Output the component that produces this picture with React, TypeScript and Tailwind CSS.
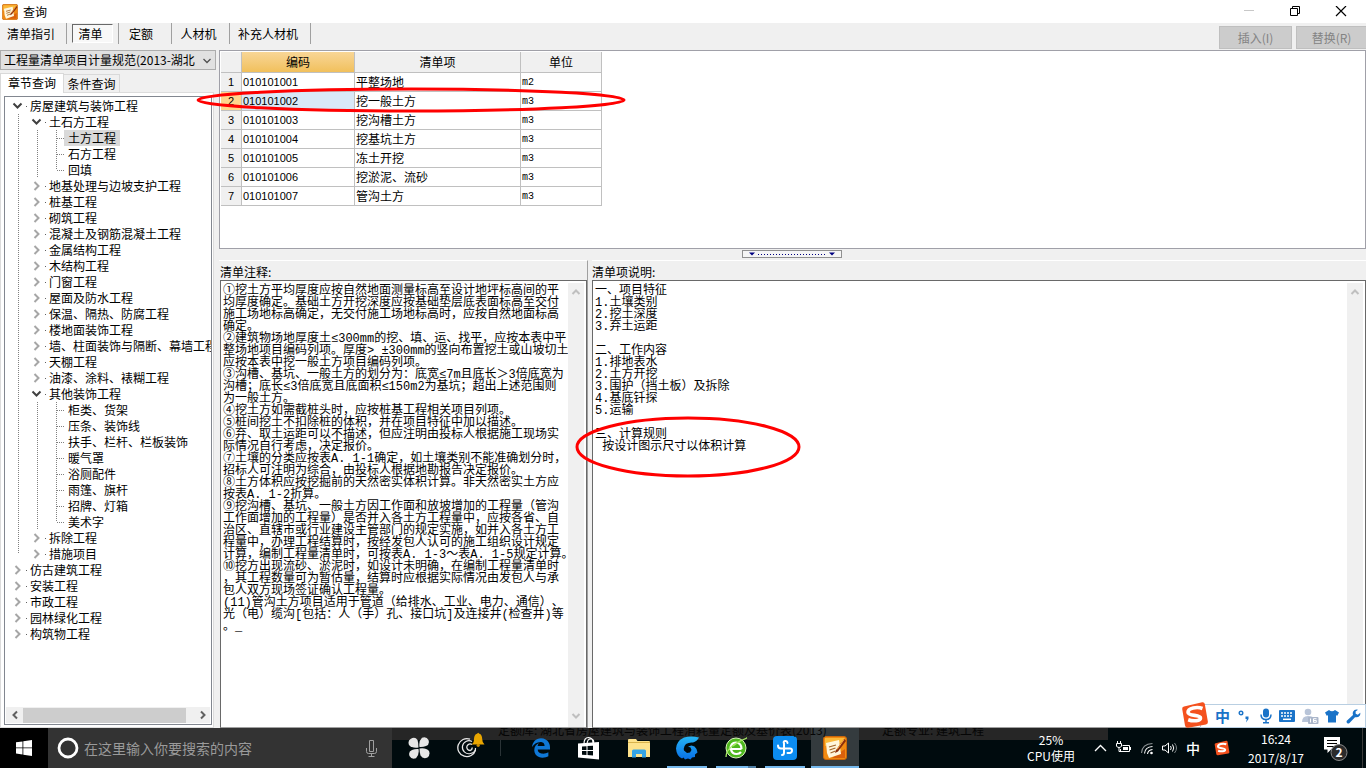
import React from "react";
import { FaEdgeLegacy } from "react-icons/fa";

type TreeRow = { label: string; depth: number; state: "open" | "closed" | "leaf"; last?: boolean };

const closed = (label: string, last = false): TreeRow => ({ label, depth: 1, state: "closed", last });
const leaf = (label: string, last = false): TreeRow => ({ label, depth: 2, state: "leaf", last });

const treeRows: TreeRow[] = [
  { label: "房屋建筑与装饰工程", depth: 0, state: "open" },
  { label: "土石方工程", depth: 1, state: "open" },
  leaf("土方工程"),
  leaf("石方工程"),
  leaf("回填", true),
  closed("地基处理与边坡支护工程"),
  closed("桩基工程"),
  closed("砌筑工程"),
  closed("混凝土及钢筋混凝土工程"),
  closed("金属结构工程"),
  closed("木结构工程"),
  closed("门窗工程"),
  closed("屋面及防水工程"),
  closed("保温、隔热、防腐工程"),
  closed("楼地面装饰工程"),
  closed("墙、柱面装饰与隔断、幕墙工程"),
  closed("天棚工程"),
  closed("油漆、涂料、裱糊工程"),
  { label: "其他装饰工程", depth: 1, state: "open" },
  leaf("柜类、货架"),
  leaf("压条、装饰线"),
  leaf("扶手、栏杆、栏板装饰"),
  leaf("暖气罩"),
  leaf("浴厕配件"),
  leaf("雨篷、旗杆"),
  leaf("招牌、灯箱"),
  leaf("美术字", true),
  closed("拆除工程"),
  closed("措施项目", true),
  { label: "仿古建筑工程", depth: 0, state: "closed" },
  { label: "安装工程", depth: 0, state: "closed" },
  { label: "市政工程", depth: 0, state: "closed" },
  { label: "园林绿化工程", depth: 0, state: "closed" },
  { label: "构筑物工程", depth: 0, state: "closed" },
];

const items = [
  ["010101001", "平整场地", "m2"],
  ["010101002", "挖一般土方", "m3"],
  ["010101003", "挖沟槽土方", "m3"],
  ["010101004", "挖基坑土方", "m3"],
  ["010101005", "冻土开挖", "m3"],
  ["010101006", "挖淤泥、流砂", "m3"],
  ["010101007", "管沟土方", "m3"],
];

const notes = `①挖土方平均厚度应按自然地面测量标高至设计地坪标高间的平
均厚度确定。基础土方开挖深度应按基础垫层底表面标高至交付
施工场地标高确定，无交付施工场地标高时，应按自然地面标高
确定。
②建筑物场地厚度土≤300mm的挖、填、运、找平，应按本表中平
整场地项目编码列项。厚度> ±300mm的竖向布置挖土或山坡切土
应按本表中挖一般土方项目编码列项。
③沟槽、基坑、一般土方的划分为：底宽≤7m且底长＞3倍底宽为
沟槽；底长≤3倍底宽且底面积≤150m2为基坑；超出上述范围则
为一般土方。
④挖土方如需截桩头时，应按桩基工程相关项目列项。
⑤桩间挖土不扣除桩的体积，并在项目特征中加以描述。
⑥弃、取土运距可以不描述，但应注明由投标人根据施工现场实
际情况自行考虑，决定报价。
⑦土壤的分类应按表A. 1-1确定，如土壤类别不能准确划分时，
招标人可注明为综合，由投标人根据地勘报告决定报价。
⑧土方体积应按挖掘前的天然密实体积计算。非天然密实土方应
按表A. 1-2折算。
⑨挖沟槽、基坑、一般土方因工作面和放坡增加的工程量（管沟
工作面增加的工程量）是否并入各土方工程量中，应按各省、自
治区、直辖市或行业建设主管部门的规定实施，如并入各土方工
程量中，办理工程结算时，按经发包人认可的施工组织设计规定
计算，编制工程量清单时，可按表A. 1-3～表A. 1-5规定计算。
⑩挖方出现流砂、淤泥时，如设计未明确，在编制工程量清单时
，其工程数量可为暂估量，结算时应根据实际情况由发包人与承
包人双方现场签证确认工程量。
(11)管沟土方项目适用于管道（给排水、工业、电力、通信）、
光（电）缆沟[包括：人（手）孔、接口坑]及连接井(检查井)等
。_`;

const description = `一、项目特征
1.土壤类别
2.挖土深度
3.弃土运距

二、工作内容
1.排地表水
2.土方开挖
3.围护（挡土板）及拆除
4.基底钎探
5.运输

三、计算规则
 按设计图示尺寸以体积计算`;

function AppLogo({ className }: { className: string }) {
  return (
    <svg viewBox="0 0 24 24" className={className} aria-hidden="true">
      <rect x="0.5" y="0.5" width="23" height="23" rx="2.5" fill="#f08a12" stroke="#c9660a" />
      <path d="M2 2h20v4L2 10z" fill="#fbb93a" />
      <path d="M2 22h20v-9L9 22z" fill="#d9600c" />
      <path d="M3 7l13-3 2 14-12 4-2-5z" fill="#fff6dc" />
      <path d="M6 11l7-2M6.5 14l6-2M7.5 17l5-2" stroke="#a5672b" strokeWidth="1.3" fill="none" />
      <path d="M21.5 2.5L13 14l-1 3 3-1.500L23 5z" fill="#8b2e0c" />
      <path d="M21 3.500L14 13.500" stroke="#f9a94a" strokeWidth="1" />
    </svg>
  );
}

function SogouLogo({ className }: { className: string }) {
  return (
    <svg viewBox="0 0 28 28" className={className} aria-hidden="true">
      <path d="M3 5.500Q1 5.800 1.200 8L4 24.500Q4.500 27 7 26.700L25 23.500Q27.200 23 26.900 20.800L23.800 3Q23.400 .9 21.200 1.200z" fill="#f4511e" />
      <path d="M21.500 7.500C16 5.500 7 7 7 11.300c0 4.200 12.500 2 12.500 5.700 0 3-7 3.600-12.300 1.700" fill="none" stroke="#fff" strokeWidth="3.600" />
    </svg>
  );
}

function Chevron({ dir, className, weight = 2 }: { dir: "up" | "down" | "left" | "right"; className: string; weight?: number }) {
  const paths = {
    up: "M1.500 7L5 3.500 8.500 7",
    down: "M1.500 3L5 6.500 8.500 3",
    left: "M7 1.500L3.500 5 7 8.500",
    right: "M3 1.500L6.500 5 3 8.500",
  };
  return (
    <svg viewBox="0 0 10 10" className={className} fill="none" stroke="currentColor" strokeWidth={weight} aria-hidden="true">
      <path d={paths[dir]} />
    </svg>
  );
}

function TreeItem({ row }: { row: TreeRow }) {
  const cells = [];
  for (let level = 0; level < row.depth; level++) {
    cells.push(
      <svg key={level} width="19" height="16" className="shrink-0" aria-hidden="true">
        <path d={row.last && row.depth === 1 ? "M11.500 0V8" : "M11.500 0V16"} stroke="#808080" strokeDasharray="1 1" />
      </svg>
    );
  }
  return (
    <li role="treeitem" aria-expanded={row.state === "leaf" ? undefined : row.state === "open"} className="flex h-4 items-center">
      {cells}
      <svg width="19" height="16" className="shrink-0" fill="none" aria-hidden="true">
        {row.state === "leaf" && (
          <>
            <path d={row.last ? "M11.500 0V8" : "M11.500 0V16"} stroke="#808080" strokeDasharray="1 1" />
            <path d="M12 8.500H19" stroke="#808080" strokeDasharray="1 1" />
          </>
        )}
        {row.state === "open" && <path d="M6.500 5.500L10.500 9.500L14.500 5.500" stroke="#404040" strokeWidth="2" />}
        {row.state === "closed" && <path d="M8.500 4L12.500 8L8.500 12" stroke="#a6a6a6" strokeWidth="2" />}
      </svg>
      <button
        type="button"
        className={
          "relative h-4 px-1 leading-4 whitespace-nowrap " + (row.label === "土方工程" ? "bg-[#d9d9d9]" : "")
        }
      >
        {row.state !== "leaf" && <span className="absolute left-0 top-2 h-px w-px bg-[#606060]" />}
        {row.label}
      </button>
    </li>
  );
}

function VerticalScroll() {
  return (
    <div className="mt-0.5 mr-0.5 flex w-4 shrink-0 flex-col items-center justify-between bg-[#f0f0f0] pt-1 pb-1.5 text-[#bfbfbf]">
      <Chevron dir="up" className="h-2.5 w-2.5" />
      <Chevron dir="down" className="h-2.5 w-2.5" />
    </div>
  );
}

function NotePane({ id, label, text, className, children }: { id: string; label: string; text: string; className: string; children?: React.ReactNode }) {
  return (
    <section className={"relative flex flex-col border-t border-white " + className}>
      <label htmlFor={id} className="flex h-[19px] items-end leading-4">
        {label}
      </label>
      <div className="flex flex-1 border border-[#696969] border-b-[#a0a0a0] bg-white">
        <textarea
          id={id}
          readOnly
          spellCheck={false}
          defaultValue={text}
          className="min-w-0 flex-1 resize-none overflow-hidden bg-white pt-1 pl-0.5 leading-3 whitespace-pre outline-none font-['Liberation_Mono','Noto_Sans_CJK_SC',monospace]"
        />
        <VerticalScroll />
      </div>
      {children}
    </section>
  );
}

const toolTabs = [
  { label: "清单指引", box: "w-[66px]" },
  { label: "清单", box: "w-[51px]" },
  { label: "定额", box: "w-[52px] pr-0" },
  { label: "人材机", box: "w-[57px]" },
  { label: "补充人材机", box: "w-[80px]" },
];

function toolTabClass(label: string) {
  if (label === "清单") {
    return "mx-[5px] my-px flex-1 border border-t-[#696969] border-l-[#696969] border-r-white border-b-white bg-[#f8f8f8] pr-1";
  }
  if (label === "定额") return "pr-2";
  return "pr-1";
}

function QueryWindow() {
  return (
    <div className="flex flex-1 flex-col bg-[#f0f0f0]">
      <header className="flex h-[23px] items-center justify-between bg-white pl-0.5">
        <h1 className="flex items-center gap-[5px]">
          <AppLogo className="h-4 w-4" />
          查询
        </h1>
        <div className="flex pr-0.5">
          <button type="button" aria-label="最小化" className="flex w-[46px] justify-center text-[#c8c8c8]">
            <svg width="12" height="12" stroke="currentColor"><path d="M1 4.500H11" /></svg>
          </button>
          <button type="button" aria-label="还原" className="flex w-[46px] justify-center">
            <svg width="12" height="12" stroke="#000" fill="none"><path d="M1.500 2.500H8.500V9.500H1.500zM3.500 2.500V.5H10.500V7.500H8.500" /></svg>
          </button>
          <button type="button" aria-label="关闭" className="flex w-[46px] justify-center">
            <svg width="12" height="12" stroke="#000" strokeWidth="1.200"><path d="M1 0L11 10M11 0L1 10" /></svg>
          </button>
        </div>
      </header>

      <nav className="flex h-[27px] items-start justify-between">
        <div className="flex">
          {toolTabs.map((tab) => (
            <div key={tab.label} className={"box-content flex h-[21px] items-stretch justify-center border-r border-[#a0a0a0] " + tab.box}>
              <button type="button" className={toolTabClass(tab.label)}>
                {tab.label}
              </button>
            </div>
          ))}
        </div>
        <div className="flex gap-1 pt-[3px] text-[#838383]">
          <button type="button" className="h-[23px] w-[73px] border border-[#bfbfbf] bg-[#cccccc]">插入(I)</button>
          <button type="button" className="h-[23px] w-[70px] border border-r-0 border-[#bfbfbf] bg-[#cccccc]">替换(R)</button>
        </div>
      </nav>

      <main className="flex flex-1">
        <aside className="flex w-[219px] shrink-0 flex-col pr-[5px]">
          <div className="relative">
            <select
              aria-label="计量规范"
              className="block h-5 w-[216px] appearance-none overflow-hidden border border-[#adadad] bg-[#e1e1e1] pl-[3px] pr-4 leading-4 outline-none"
            >
              <option>工程量清单项目计量规范(2013-湖北</option>
            </select>
            <Chevron dir="down" weight={1.3} className="pointer-events-none absolute top-1.5 right-0.5 h-2.5 w-2.5 text-[#505050]" />
          </div>
          <div role="tablist" className="flex items-end pt-[3px]">
            <button type="button" role="tab" aria-selected="true" className="relative z-10 -mb-px h-5 w-16 border-x border-t border-[#d9d9d9] bg-white leading-4 pb-0.5">章节查询</button>
            <button type="button" role="tab" aria-selected="false" className="h-[18px] w-14 border-t border-r border-[#d9d9d9]">条件查询</button>
          </div>
          <div className="flex flex-1 flex-col border border-[#dcdcdc] bg-white py-[3px] pr-px pb-0.5 pl-[3px]">
            <div className="flex flex-1 flex-col justify-between border border-[#828790] p-px">
              <ul role="tree" className="w-[205px] overflow-hidden pl-px">
                {treeRows.map((row) => (
                  <TreeItem key={row.label} row={row} />
                ))}
              </ul>
              <div className="flex h-4 items-center bg-[#f0f0f0] text-[#606060]">
                <span className="flex w-[17px] justify-center"><Chevron dir="left" className="h-2.5 w-2.5" /></span>
                <span className="h-[15px] flex-1 bg-[#cdcdcd]" />
                <span className="flex w-6 justify-end pr-0.5"><Chevron dir="right" className="h-2.5 w-2.5" /></span>
              </div>
            </div>
          </div>
        </aside>

        <div className="flex min-w-0 flex-1 flex-col">
          <section className="relative h-[199px] border border-[#a0a0a8] bg-white p-px">
            <table className="w-[381px] table-fixed border-separate border-spacing-0">
              <colgroup>
                <col className="w-[21px]" />
                <col className="w-[113px]" />
                <col className="w-[166px]" />
                <col className="w-[81px]" />
              </colgroup>
              <thead>
                <tr className="h-[21px] bg-[#f0f0f0]">
                  <th className="border-r border-b border-[#c0c0c0] p-0" />
                  <th className="border-r border-b border-[#c0c0c0] bg-linear-to-b from-[#f8d696] to-[#f1c05b] p-0 font-normal">编码</th>
                  <th className="border-r border-b border-[#c0c0c0] p-0 font-normal">清单项</th>
                  <th className="border-r border-b border-[#c0c0c0] p-0 font-normal">单位</th>
                </tr>
              </thead>
              <tbody>
                {items.map(([code, name, unit], i) => (
                  <tr key={code} className="h-[19px] leading-4">
                    <th scope="row" className={"border-r border-b border-[#c0c0c0] p-0 text-[11px] leading-4 font-normal font-['Liberation_Sans',sans-serif] " + (i === 1 ? "bg-[#ffd58d]" : "bg-[#f0f0f0]")}>
                      {i + 1}
                    </th>
                    <td className={"border-r border-b border-[#c0c0c0] p-0 pl-px text-[11px] leading-4 font-['Liberation_Sans',sans-serif] " + (i === 1 ? "bg-[#d9e9f7]" : "")}>{code}</td>
                    <td className="border-r border-b border-[#c0c0c0] p-0 pl-px">{name}</td>
                    <td className="border-r border-b border-[#c0c0c0] p-0 pt-0.5 pl-px text-[10px] leading-4 font-['Liberation_Mono',monospace]">{unit}</td>
                  </tr>
                ))}
              </tbody>
            </table>
            <svg className="pointer-events-none absolute top-[36px] -left-[25px] z-20" width="432" height="26" fill="none" aria-hidden="true">
              <ellipse cx="216" cy="13" rx="213" ry="11" stroke="#f00" strokeWidth="3" />
            </svg>
          </section>

          <div className="flex h-[11px] items-start justify-center pt-px pr-0.5">
            <svg width="100" height="8" aria-hidden="true">
              <rect x="0.500" y="0.500" width="99" height="7" fill="#f5f5f5" stroke="#909090" />
              <path d="M7 2.500h6l-3 3zM87 2.500h6l-3 3z" fill="#000080" />
              <path d="M16 4.500H84" stroke="#000080" strokeDasharray="1 2" />
            </svg>
          </div>

          <div className="flex flex-1">
            <NotePane id="notes" label="清单注释:" text={notes} className="w-[369px] shrink-0 border-r border-r-[#a0a0a0] pl-px" />
            <NotePane id="description" label="清单项说明:" text={description} className="ml-1 min-w-0 flex-1">
              <svg className="pointer-events-none absolute top-[154px] -left-[18px] z-20" width="228" height="64" fill="none" aria-hidden="true">
                <ellipse cx="114" cy="32" rx="111" ry="29" stroke="#f00" strokeWidth="3" />
              </svg>
            </NotePane>
          </div>
        </div>
      </main>
    </div>
  );
}

function ImeBar() {
  return (
    <div className="absolute right-0 bottom-full z-30 flex h-6 w-[166px] items-center justify-between border border-[#b9cfe2] bg-white pr-1 pl-[33px] text-[#1a73c8]">
      <SogouLogo className="absolute -top-1 -left-5 h-7 w-7" />
      <button type="button" className="absolute left-3.5 text-[15px] leading-5 font-bold">中</button>
      <svg width="14" height="16" className="ml-1" fill="none" stroke="currentColor" aria-hidden="true">
        <circle cx="3" cy="5" r="1.800" strokeWidth="1.400" />
        <path d="M7.500 8.500h3v2.500l-2.500 3.500 .8-3.500h-1.300z" fill="currentColor" stroke="none" />
      </svg>
      <svg width="14" height="16" fill="none" stroke="currentColor" aria-hidden="true">
        <rect x="4" y="0.500" width="6" height="9" rx="3" fill="currentColor" stroke="none" />
        <path d="M2 6.500Q2 11.500 7 11.500T12 6.500M7 11.500V15M4 14.800H10" strokeWidth="1.500" />
      </svg>
      <svg width="16" height="12" aria-hidden="true">
        <rect x="0" y="0" width="16" height="12" rx="1" fill="currentColor" />
        <path d="M2 3H14M2 6H14" stroke="#fff" strokeWidth="1.500" strokeDasharray="2 1" />
        <path d="M4 9.300H12" stroke="#fff" strokeWidth="1.500" />
      </svg>
      <svg width="17" height="16" aria-hidden="true">
        <circle cx="6" cy="4" r="3.300" fill="#b8c4d8" />
        <path d="M0 14Q0 8 6 8T11 11V14z" fill="#b8c4d8" />
        <rect x="6" y="9" width="10.500" height="7" rx="1" fill="#aab6ca" />
        <path d="M8.500 10.500V14.500M14.500 10.700H11.500V14.300H14.300V12.500H11.500" stroke="#fff" fill="none" />
      </svg>
      <svg width="14" height="14" aria-hidden="true">
        <path d="M4 1Q7 3.500 10 1L14 3.500 12.300 6.800 11 6.200V13.500H3V6.200L1.700 6.800 0 3.500z" fill="currentColor" />
      </svg>
      <svg width="15" height="15" aria-hidden="true">
        <path d="M14.300 3.800L11.800 5.800 9.700 4.800 9.600 2.500 12 .8Q8.500 0 7 2.700 6.400 4.300 7 6L.8 11.700Q0 13 1.100 14T3.500 14L9 8.200Q12 8.800 13.700 6.800 14.600 5.400 14.300 3.800z" fill="currentColor" />
      </svg>
    </div>
  );
}

function TaskButton({ label, className = "", children }: { label: string; className?: string; children: React.ReactNode }) {
  return (
    <button type="button" aria-label={label} className={"relative flex h-10 w-12 items-center justify-center " + className}>
      {children}
    </button>
  );
}

const runningBar = "absolute bottom-0 left-1 right-1 h-0.5 bg-[#76b9ed]";

function Taskbar() {
  return (
    <footer className="relative z-10 flex h-10 items-stretch bg-[#000b0e] text-white">
      <button type="button" aria-label="开始" className="flex w-12 items-center justify-center bg-black">
        <svg width="16" height="16" fill="#fff" aria-hidden="true">
          <path d="M0 2.300L6.500 1.400V7.500H0zM7.300 1.200L16 0V7.500H7.300zM0 8.300H6.500V14.500L0 13.600zM7.300 8.300H16V16L7.300 14.700z" />
        </svg>
      </button>
      <div className="flex w-[344px] items-center bg-[#333333] pr-3.5 pl-[9px]">
        <svg width="22" height="22" fill="none" aria-hidden="true"><circle cx="11" cy="11" r="9" stroke="#fff" strokeWidth="2.800" /></svg>
        <input
          type="text"
          aria-label="搜索"
          placeholder="在这里输入你要搜索的内容"
          className="min-w-0 flex-1 bg-transparent pl-[5px] text-sm outline-none placeholder:text-[#9a9a9a]"
        />
        <svg width="13" height="17" fill="none" stroke="#a0a0a0" aria-hidden="true">
          <path d="M4.500 .5H8.500V11.500H4.500zM1.500 8V11.500Q1.500 13.500 3.500 13.500H9.500Q11.500 13.500 11.500 11.500V8M6.500 13.500V16M3.500 16.500H9.500" />
        </svg>
      </div>

      <div className="relative flex flex-1 items-center justify-between">
        <div className="absolute top-0 left-0 h-3 w-[716px] bg-[#262626]" />
        <div className="pointer-events-none absolute top-0 left-0 z-10 flex h-[9px] w-[716px] items-end overflow-hidden pl-[106px] text-[#050505]">
          <span className="w-[384px] whitespace-nowrap leading-[14px]">定额库: 湖北省房屋建筑与装饰工程消耗量定额及基价表(2013)</span>
          <span className="whitespace-nowrap leading-[14px]">定额专业: 建筑工程</span>
        </div>
        <div className="flex pl-[3px]">
          <TaskButton label="四叶助手">
            <svg width="22" height="22" fill="#e6e6e6" aria-hidden="true">
              <path d="M10.500 10.500Q4 11.500 1 8 -.5 4 2.500 2 7 -1 9.500 3 10.500 6 10.500 10.500z" />
              <path d="M11.500 10Q10.500 4 14 .8 18.500 -.8 20.500 3 22 7.500 18 9 15 10.300 11.500 10z" />
              <path d="M11.500 11.500Q18 10.500 21 14 22.500 18 19.500 20.500 15 22.500 12.500 18.500 11.500 15.500 11.500 11.500z" />
              <path d="M10.500 12Q11.500 18 8 21.200 3.500 22.800 1.500 19 0 14.500 4 13 7 11.700 10.500 12z" />
            </svg>
          </TaskButton>
          <TaskButton label="提醒">
            <svg width="28" height="28" fill="none" className="-mt-1 ml-2" aria-hidden="true">
              <path d="M13 7.200A9 9 0 1 0 18.500 18" stroke="#e8e8e8" strokeWidth="1.300" />
              <path d="M15 9.500A6.500 6.500 0 1 0 13.500 21.500Q19 20.500 18.500 16" stroke="#e8e8e8" strokeWidth="1.200" />
              <path d="M15 12.500A3.300 3.300 0 1 0 13 18.500Q15.500 18 15 15.500" stroke="#e8e8e8" strokeWidth="1.300" />
              <path d="M14.500 12.500Q17 11 17 7 17.200 2.500 20 1.800L21.200 .8 22.400 1.800Q25 2.500 25.200 7 25.300 11 27.500 12.500z" fill="#e9a600" />
              <circle cx="21.200" cy="13.300" r="1.600" fill="#c98c00" />
            </svg>
          </TaskButton>
          <span className="my-3 mr-[-9px] ml-[9px] w-[26px] border-l border-[#2a3336]" />
          <TaskButton label="Edge"><FaEdgeLegacy className="h-5 w-5 text-[#0f78d7]" /></TaskButton>
          <TaskButton label="应用商店">
            <svg width="22" height="24" aria-hidden="true">
              <path d="M6 8Q6 1.500 10.500 1.500T15 7M9 8Q9.500 2.500 13 3T15.500 7" stroke="#fff" fill="none" strokeWidth="1.200" />
              <path d="M0 7.500L21 6V23.500L0 21.500z" fill="#fff" />
              <path d="M4 10.500L8.500 10.200V14H4zM9.500 10.100L15 9.800V14H9.500zM4 15H8.500V19L4 18.700zM9.500 15H15V19.600L9.500 19.100z" fill="#000b0e" />
            </svg>
          </TaskButton>
          <TaskButton label="文件资源管理器" className="ml-0.5">
            <svg width="22" height="19" aria-hidden="true">
              <path d="M0 1Q0 0 1 0H8L9.500 2H21Q22 2 22 3V18H0z" fill="#fde28b" />
              <path d="M0 3.500H22" stroke="#d8b34c" />
              <path d="M4 18.500V12Q4 10.500 5.500 10.500H16.500Q18 10.500 18 12V18.500H14V15H8V18.500z" fill="#35a4e4" />
            </svg>
          </TaskButton>
          <TaskButton label="浏览器">
            <svg width="25" height="24" fill="none" aria-hidden="true">
              <defs>
                <linearGradient id="swirl" x1="0" y1="0" x2="0" y2="1"><stop offset="0" stopColor="#26b6f5" /><stop offset="1" stopColor="#0870e8" /></linearGradient>
              </defs>
              <path d="M24 1.500Q16-.5 9 1.500 1.500 5 1 12.500 1.500 20 7 22.500L8.500 21.500 10 23.500 13 22.500 15.500 23.500 17 21.500 20 21 20 18.500 22.500 16.500 21.500 13 19.500 10.500 16.500 9.500 13 10.500 15.500 11.500 16.500 14 15 16.500 12 17 9 14.500Q8 11 11 8 14 6 18 6.500 22 5.500 24 1.500z" fill="url(#swirl)" />
            </svg>
            <span className={runningBar} />
          </TaskButton>
          <TaskButton label="安全浏览器" className="ml-px">
            <svg width="24" height="24" fill="none" aria-hidden="true">
              <circle cx="12" cy="12" r="10" fill="#4eb81e" stroke="#d7f3b9" />
              <path d="M17.500 13H6.500Q6.500 6.800 12 6.500 17.500 7 17.500 13M7 13.500Q8 18 12.500 18 15.500 18 17 16" stroke="#fff" strokeWidth="2.200" />
              <path d="M2 21Q2 10 23 2 15 5 9 10" stroke="#a6e765" strokeWidth="1.300" />
            </svg>
            <span className={runningBar} />
            <span className="absolute right-1 bottom-0 h-0.5 w-2 bg-[#4f7fa5]" />
          </TaskButton>
          <TaskButton label="协作" className="ml-px">
            <svg width="24" height="24" fill="none" aria-hidden="true">
              <rect width="24" height="24" rx="4" fill="#0c8cf0" />
              <path d="M14.500 7Q14 4.500 12 5T11 7.500V16.500Q11 19 9 19M5 9.500Q5 12.500 8 12.500H17Q19 12.500 19 14.500T17 17H14.500" stroke="#fff" strokeWidth="2" strokeLinecap="round" />
            </svg>
            <span className={runningBar} />
          </TaskButton>
          <TaskButton label="查询" className="ml-0.5 bg-[#343b3e]">
            <AppLogo className="h-6 w-6" />
            <span className="absolute right-0 bottom-0 left-0 h-0.5 bg-[#76b9ed]" />
          </TaskButton>
        </div>

        <div className="relative flex h-10 items-center">
          <div className="w-[52px] text-center text-xs leading-4">
            <div>25%</div>
            <div className="whitespace-nowrap">CPU使用</div>
          </div>
          <div className="ml-4 flex items-center gap-2">
            <svg width="14" height="16" fill="none" stroke="#fff" strokeWidth="1.300" aria-hidden="true"><path d="M2 11L7.500 5.500 13 11" /></svg>
            <svg width="17" height="16" fill="none" stroke="#fff" aria-hidden="true">
              <path d="M2.500 1V3M5.500 1V3M1.500 3.500H6.500V6Q6 7.500 4 7.500T1.500 6zM4 7.500V11.500H6" />
              <path d="M7.500 5.500H14.500V11.500H5.500V9" />
              <path d="M8 7H13V10H8z" fill="#fff" stroke="none" />
              <path d="M15.500 7V10" />
            </svg>
            <svg width="14" height="16" fill="none" stroke="#fff" strokeWidth="1.100" aria-hidden="true">
              <path d="M1.500 13Q2 4 12.500 3.500" stroke="#8c9294" /><path d="M4.500 13.500Q5 7 12.500 6.500" /><path d="M7.500 14Q8 10 12.500 9.500" />
              <circle cx="11.500" cy="13" r="1.300" fill="#fff" stroke="none" />
            </svg>
            <svg width="16" height="16" fill="none" stroke="#fff" aria-hidden="true">
              <path d="M.5 6V10H3L6.500 13V3L3 6zM8.500 6Q10 8 8.500 10M10.500 4.500Q13 8 10.500 11.500" /><path d="M12.500 3Q16.500 8 12.500 13" stroke="#7d8486" />
            </svg>
            <span className="text-sm leading-4 font-medium">中</span>
            <SogouLogo className="ml-1.5 h-4 w-4" />
          </div>
          <div className="relative ml-3 w-[68px] text-center text-xs leading-[19px]">
            <div>16:24</div>
            <div>2017/8/17</div>
          </div>
          <button type="button" aria-label="通知" className="mx-3 flex w-7 items-center">
            <svg width="26" height="26" aria-hidden="true">
              <path d="M2 2H18V14.500H9L5.500 18V14.500H2z" fill="#fff" />
              <path d="M5 5.500H15M5 8.500H15M5 11.500H12" stroke="#000" />
              <circle cx="17" cy="17.500" r="8" fill="#2b2b2b" stroke="#8a8a8a" />
              <text x="17" y="22" textAnchor="middle" fill="#fff" fontSize="12" fontWeight="700">2</text>
            </svg>
          </button>
          <span className="mr-[3px] h-10 w-px bg-[#3a3a3a]" />
        </div>
      </div>
      <ImeBar />
    </footer>
  );
}

export default function App() {
  return (
    <div lang="zh-CN" className="flex min-h-screen flex-col text-xs text-black [text-spacing-trim:space-all] font-['Noto_Sans_CJK_SC',sans-serif]">
      <QueryWindow />
      <Taskbar />
    </div>
  );
}
